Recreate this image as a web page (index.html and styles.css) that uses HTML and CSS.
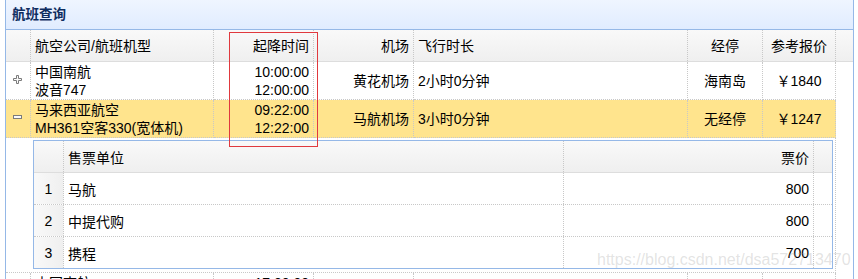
FILE: index.html
```html
<!DOCTYPE html>
<html lang="zh-CN">
<head>
<meta charset="utf-8">
<title>航班查询</title>
<link rel="stylesheet" href="styles.css">
</head>
<body>
<div class="panel">
  <div class="panel-title">航班查询</div>
  <div class="grid-body">
    <div class="head-wrap">
      <div class="cols head">
        <div class="c"></div>
        <div class="c">航空公司/航班机型</div>
        <div class="c right">起降时间</div>
        <div class="c right">机场</div>
        <div class="c">飞行时长</div>
        <div class="c center">经停</div>
        <div class="c center">参考报价</div>
      </div>
    </div>

    <div class="cols row">
      <div class="c exp"><svg width="9" height="9" viewBox="0 0 9 9"><path d="M3.5 .5h2v3h3v2h-3v3h-2v-3h-3v-2h3z" fill="#fafafa" stroke="#7b7b7b"/></svg></div>
      <div class="c multi"><span>中国南航</span><span>波音747</span></div>
      <div class="c multi right"><span>10:00:00</span><span>12:00:00</span></div>
      <div class="c right">黄花机场</div>
      <div class="c">2小时0分钟</div>
      <div class="c center">海南岛</div>
      <div class="c center">￥1840</div>
    </div>

    <div class="cols row selected">
      <div class="c exp"><svg width="9" height="9" viewBox="0 0 9 9"><rect x=".5" y="2.5" width="8" height="3" fill="#fafafa" stroke="#7b7b7b"/></svg></div>
      <div class="c multi"><span>马来西亚航空</span><span>MH361空客330(宽体机)</span></div>
      <div class="c multi right"><span>09:22:00</span><span>12:22:00</span></div>
      <div class="c right">马航机场</div>
      <div class="c">3小时0分钟</div>
      <div class="c center">无经停</div>
      <div class="c center">￥1247</div>
    </div>

    <div class="detail">
      <div class="sub">
        <div class="sub-cols sub-head">
          <div class="s num"></div>
          <div class="s">售票单位</div>
          <div class="s right">票价</div>
          <div class="s fill"></div>
        </div>
        <div class="sub-cols sub-row">
          <div class="s num">1</div>
          <div class="s">马航</div>
          <div class="s right">800</div>
          <div class="s fill"></div>
        </div>
        <div class="sub-cols sub-row">
          <div class="s num">2</div>
          <div class="s">中提代购</div>
          <div class="s right">800</div>
          <div class="s fill"></div>
        </div>
        <div class="sub-cols sub-row last">
          <div class="s num">3</div>
          <div class="s">携程</div>
          <div class="s right">700</div>
          <div class="s fill"></div>
        </div>
      </div>
    </div>

    <div class="cols row">
      <div class="c exp"><svg width="9" height="9" viewBox="0 0 9 9"><path d="M3.5 .5h2v3h3v2h-3v3h-2v-3h-3v-2h3z" fill="#fafafa" stroke="#7b7b7b"/></svg></div>
      <div class="c multi"><span>中国南航</span><span>波音737</span></div>
      <div class="c multi right"><span>17:00:00</span><span>19:00:00</span></div>
      <div class="c right">白云机场</div>
      <div class="c">2小时0分钟</div>
      <div class="c center">无经停</div>
      <div class="c center">￥1500</div>
    </div>
  </div>

  <div class="mark-box"></div>
  <div class="watermark">https://blog.csdn.net/dsa572713470</div>
</div>
</body>
</html>
```

FILE: styles.css
```css
html, body {
  margin: 0;
  padding: 0;
  background: #fff;
  overflow: hidden;
}

body {
  font-family: "Liberation Sans", "Noto Sans CJK SC", sans-serif;
  font-size: 14px;
  color: #000;
}

.panel {
  position: relative;
  margin-left: 5px;
  width: 849px;
  height: 300px;
  box-sizing: border-box;
  border-left: 1px solid #95B8E7;
  border-right: 1px solid #95B8E7;
}

.panel-title {
  height: 29px;
  line-height: 29px;
  padding-left: 6px;
  border-bottom: 1px solid #95B8E7;
  background: linear-gradient(to bottom, #EFF5FF 0, #E0ECFF 100%);
  color: #0E2D5F;
  font-weight: bold;
  font-size: 13.5px;
}

.head-wrap {
  background: linear-gradient(to bottom, #F9F9F9 0, #EFEFEF 100%);
  border-bottom: 1px solid #dddddd;
}

.cols {
  display: grid;
  grid-template-columns: 25px 183px 100px 100px 274px 75px 73px;
  width: 830px;
}

.head {
  height: 31px;
}

.c {
  box-sizing: border-box;
  border-right: 1px dotted #c8c8c8;
  display: flex;
  align-items: center;
  padding: 0 4px;
  white-space: nowrap;
  line-height: 18px;
}

.row .c {
  height: 38px;
  border-bottom: 1px dotted #c8c8c8;
}

.selected .c {
  background: #FFE48D;
}

.right {
  justify-content: flex-end;
}

.center {
  justify-content: center;
}

.multi {
  flex-direction: column;
  align-items: flex-start;
  justify-content: center;
}

.multi.right {
  align-items: flex-end;
}

.exp {
  padding: 0 0 0 7px;
}

.exp svg {
  display: block;
  margin-bottom: 2px;
}

.detail {
  width: 830px;
  box-sizing: border-box;
  padding: 2px 2px 3px 27px;
  border-right: 1px dotted #c8c8c8;
  border-bottom: 1px dotted #c8c8c8;
}

.sub {
  width: 800px;
  box-sizing: border-box;
  border: 1px solid #95B8E7;
}

.sub-cols {
  display: grid;
  grid-template-columns: 30px 500px 250px 18px;
}

.sub-head {
  height: 32px;
  box-sizing: border-box;
  border-bottom: 1px solid #dddddd;
  background: linear-gradient(to bottom, #F9F9F9 0, #EFEFEF 100%);
}

.sub-row {
  height: 32px;
  box-sizing: border-box;
  border-bottom: 1px dotted #c8c8c8;
}

.sub-row.last {
  height: 31px;
  border-bottom: 0;
}

.s {
  box-sizing: border-box;
  border-right: 1px dotted #c8c8c8;
  display: flex;
  align-items: center;
  padding: 0 4px;
  white-space: nowrap;
}

.s.fill {
  border-right: 0;
}

.s.num {
  justify-content: center;
  padding: 0;
}

.sub-row .s.num {
  background: linear-gradient(to right, #F9F9F9 0, #EFEFEF 100%);
}

.mark-box {
  position: absolute;
  left: 223px;
  top: 32px;
  width: 89px;
  height: 115px;
  box-sizing: border-box;
  border: 1px solid #E0393E;
}

.watermark {
  position: absolute;
  left: 591px;
  top: 251px;
  font-family: "Liberation Sans", sans-serif;
  font-size: 16px;
  line-height: 18px;
  color: rgba(160, 160, 160, 0.3);
  white-space: nowrap;
  pointer-events: none;
}
```
